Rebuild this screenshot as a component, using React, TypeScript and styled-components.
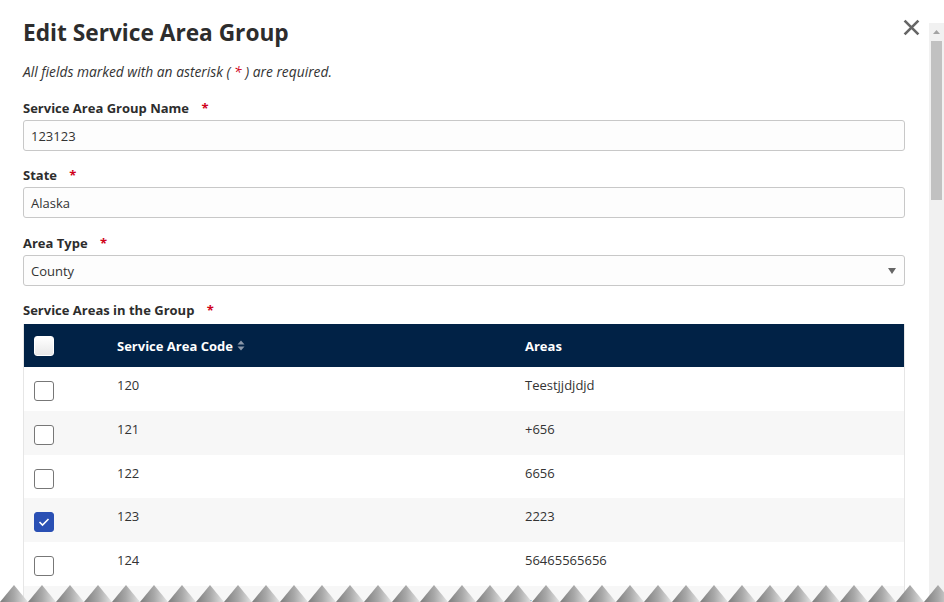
import React from 'react'
import styled, { createGlobalStyle } from 'styled-components'

const GlobalStyle = createGlobalStyle`
    html, body {
        margin: 0;
        padding: 0;
        background: #ffffff;
        overflow: hidden;
    }
    body {
        font-family: "Open Sans", "Liberation Sans", sans-serif;
        color: #333333;
    }
`

const Page = styled.div`
    position: relative;
    display: flex;
    width: 944px;
    height: 602px;
    overflow: hidden;
`

const Body = styled.div`
    flex: 1;
    padding: 18px 24px 0 23px;
    min-width: 0;
`

const Header = styled.div`
    display: flex;
    align-items: flex-start;
    justify-content: space-between;
`

const Title = styled.h2`
    margin: 0;
    font-size: 22.7px;
    line-height: 30px;
    font-weight: 700;
    color: #2d2d2d;
`

const CloseButton = styled.button`
    margin: 0 -15px 0 0;
    padding: 0;
    width: 18px;
    height: 18px;
    border: none;
    background: none;
    cursor: pointer;
    display: flex;
    align-items: center;
    justify-content: center;
`

const Note = styled.p`
    margin: 15px 0 0;
    font-size: 13.8px;
    line-height: 18px;
    font-style: italic;
    color: #333;
`

const Required = styled.span`
    color: #d0021b;
`

const Field = styled.div<{ $gap?: number }>`
    margin-top: ${(p) => p.$gap ?? 15}px;
`

const Label = styled.label<{ $space?: number }>`
    display: block;
    font-size: 13px;
    line-height: 18px;
    font-weight: 700;
    color: #2d2d2d;
    margin-bottom: ${(p) => p.$space ?? 3}px;
`

const Star = styled.span`
    color: #d0021b;
    margin-left: 9px;
`

const Input = styled.div`
    box-sizing: border-box;
    height: 31px;
    border: 1px solid #c8c8c8;
    border-radius: 3px;
    background: #fdfdfd;
    padding: 0 7px;
    display: flex;
    align-items: center;
    justify-content: space-between;
    font-size: 13px;
    color: #333;
`

const Caret = styled.span`
    width: 0;
    height: 0;
    border-left: 4px solid transparent;
    border-right: 4px solid transparent;
    border-top: 6px solid #666;
    margin-right: 1px;
`

const Table = styled.div`
    border-left: 1px solid #e6e6e6;
    border-right: 1px solid #e6e6e6;
`

const HeadRow = styled.div`
    display: grid;
    grid-template-columns: 93px 408px 1fr;
    align-items: center;
    height: 43px;
    background: #012246;
    color: #ffffff;
    font-size: 13px;
    font-weight: 700;
`

const Row = styled.div<{ $alt: boolean }>`
    display: grid;
    grid-template-columns: 93px 408px 1fr;
    align-items: start;
    height: 43.8px;
    background: ${(p) => (p.$alt ? '#f7f7f7' : '#ffffff')};
    font-size: 13px;
    color: #333;
`

const BoxCell = styled.div<{ $head?: boolean }>`
    padding-left: 10px;
    padding-top: ${(p) => (p.$head ? 0 : 14)}px;
    display: flex;
`

const Cell = styled.div`
    padding-top: 9px;
    line-height: 18px;
`

const HeadCell = styled.div`
    display: flex;
    align-items: center;
    gap: 4px;
`

const Check = styled.span<{ $checked?: boolean; $head?: boolean }>`
    box-sizing: border-box;
    width: 20px;
    height: 20px;
    border-radius: 3px;
    display: flex;
    align-items: center;
    justify-content: center;
    border: 1px solid ${(p) => (p.$checked ? '#2a50b4' : '#777')};
    background: ${(p) =>
        p.$checked ? '#2a50b4' : p.$head ? 'linear-gradient(#ffffff, #e8e8e8)' : '#ffffff'};
    ${(p) => (p.$head ? 'border-color: #ffffff;' : '')}
`

const ScrollTrack = styled.div`
    margin-top: 23px;
    width: 15px;
    background: #f1f1f1;
    display: flex;
    flex-direction: column;
    align-items: center;
`

const ScrollArrow = styled.div`
    height: 18px;
    display: flex;
    align-items: center;
    justify-content: center;
`

const ScrollThumb = styled.div`
    width: 11px;
    height: 159px;
    background: #c1c1c1;
`

const TornEdge = styled.svg`
    position: absolute;
    left: 0;
    bottom: 0;
    width: 944px;
    height: 18px;
`

const rows = [
    { code: '120', area: 'Teestjjdjdjd', checked: false },
    { code: '121', area: '+656', checked: false },
    { code: '122', area: '6656', checked: false },
    { code: '123', area: '2223', checked: true },
    { code: '124', area: '56465565656', checked: false },
    { code: '125', area: '6565', checked: false },
]

const SortIcon = () => (
    <svg width="8" height="11" viewBox="0 0 8 11">
        <path d="M4 0.5 L7.5 4.5 H0.5 Z" fill="#8b98aa" />
        <path d="M4 10.5 L7.5 6.5 H0.5 Z" fill="#8b98aa" />
    </svg>
)

const App = () => {
    return (
        <Page>
            <GlobalStyle />
            <Body>
                <Header>
                    <Title>Edit Service Area Group</Title>
                    <CloseButton aria-label="Close">
                        <svg width="17" height="17" viewBox="0 0 16 16">
                            <path d="M1.5 1.5 L14.5 14.5 M14.5 1.5 L1.5 14.5" stroke="#666" strokeWidth="2.5" />
                        </svg>
                    </CloseButton>
                </Header>
                <Note>
                    All fields marked with an asterisk ( <Required>*</Required> ) are required.
                </Note>
                <Field $gap={18}>
                    <Label>
                        Service Area Group Name <Star>*</Star>
                    </Label>
                    <Input>123123</Input>
                </Field>
                <Field>
                    <Label>
                        State <Star>*</Star>
                    </Label>
                    <Input>Alaska</Input>
                </Field>
                <Field $gap={16}>
                    <Label>
                        Area Type <Star>*</Star>
                    </Label>
                    <Input>
                        County
                        <Caret />
                    </Input>
                </Field>
                <Field $gap={15}>
                    <Label $space={5}>
                        Service Areas in the Group <Star>*</Star>
                    </Label>
                    <Table>
                        <HeadRow>
                            <BoxCell $head>
                                <Check $head />
                            </BoxCell>
                            <HeadCell>
                                Service Area Code <SortIcon />
                            </HeadCell>
                            <HeadCell>Areas</HeadCell>
                        </HeadRow>
                        {rows.map((r, i) => (
                            <Row key={r.code} $alt={i % 2 === 1}>
                                <BoxCell>
                                    <Check $checked={r.checked}>
                                        {r.checked && (
                                            <svg width="12" height="10" viewBox="0 0 12 10">
                                                <path d="M1.5 5 L4.5 8 L10.5 2" stroke="#fff" strokeWidth="1.6" fill="none" />
                                            </svg>
                                        )}
                                    </Check>
                                </BoxCell>
                                <Cell>{r.code}</Cell>
                                <Cell>{r.area}</Cell>
                            </Row>
                        ))}
                    </Table>
                </Field>
            </Body>
            <ScrollTrack>
                <ScrollArrow>
                    <svg width="7" height="4" viewBox="0 0 7 4">
                        <path d="M3.5 0 L7 4 H0 Z" fill="#a3a3a3" />
                    </svg>
                </ScrollArrow>
                <ScrollThumb />
            </ScrollTrack>
            <TornEdge viewBox="0 0 944 18" preserveAspectRatio="none">
                <defs>
                    <linearGradient id="tooth" x1="0" y1="0" x2="1" y2="0">
                        <stop offset="0" stopColor="#7d7d7d" />
                        <stop offset="0.5" stopColor="#a8a8a8" />
                        <stop offset="1" stopColor="#e4e4e4" />
                    </linearGradient>
                    <pattern id="teeth" x="0" y="0" width="28" height="18" patternUnits="userSpaceOnUse">
                        <path d="M0 18 L14 1 L28 18 Z" fill="url(#tooth)" />
                    </pattern>
                </defs>
                <rect x="0" y="0" width="944" height="18" fill="url(#teeth)" />
            </TornEdge>
        </Page>
    )
}

export default App
